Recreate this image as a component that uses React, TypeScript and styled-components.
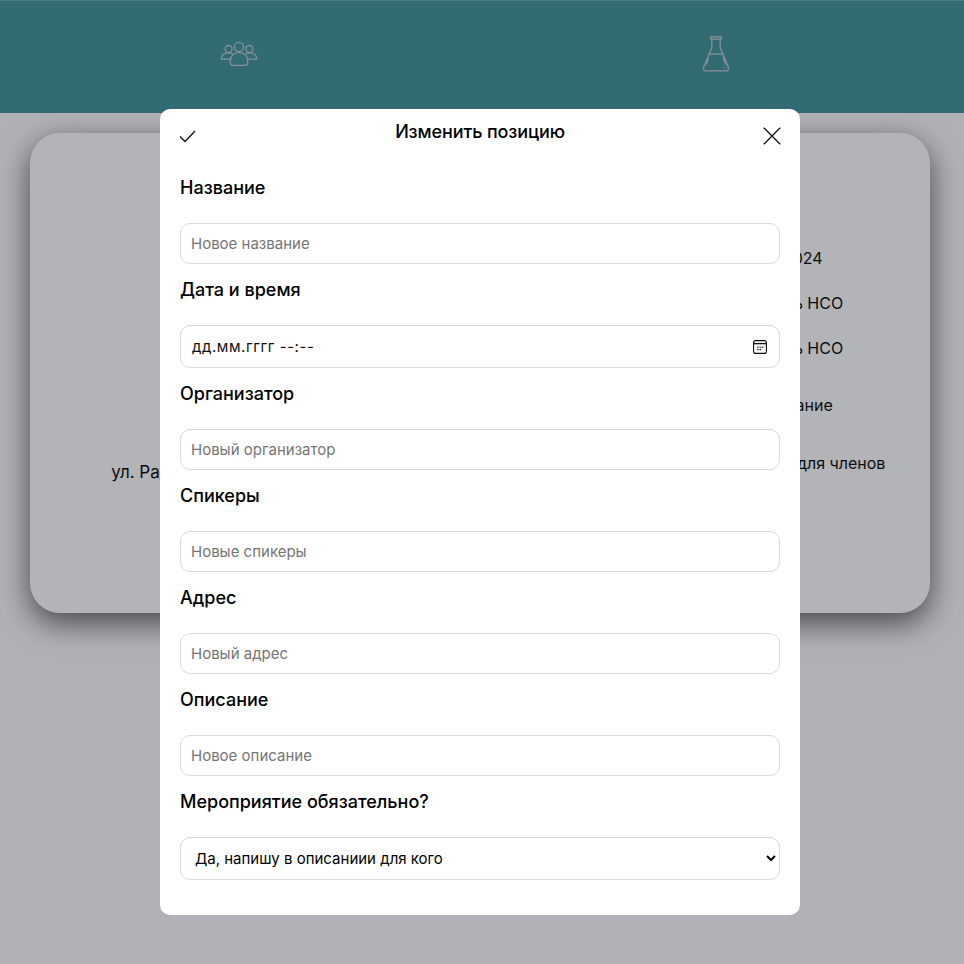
// Libraries
import React, { FC } from 'react';
import styled, { createGlobalStyle } from 'styled-components';

const GlobalStyle = createGlobalStyle`
  html, body {
    margin: 0;
    padding: 0;
    background-color: #fbfbfd;
    font-family: Inter, "Liberation Sans", sans-serif;
  }
`;

const Page = styled.div`
  position: relative;
  height: 964px;
  overflow: hidden;
`;

const Header = styled.header`
  height: 112px;
  border-top: 1px solid #6fa9b3;
  background-color: #48979e;
  display: flex;
  padding-right: 10px;
`;

const HeaderItem = styled.div`
  flex: 1;
  display: flex;
  justify-content: center;
  align-items: center;
  padding-bottom: 7px;
`;

const Card = styled.section`
  margin: 20px 34px 0 30px;
  height: 480px;
  border-radius: 30px;
  background-color: #fff;
  box-shadow: 0 10px 30px rgba(0, 0, 0, 0.6);
  display: grid;
  grid-template-columns: 1fr 1fr;
`;

const CardColumn = styled.div<{ $top: number; $left: number }>`
  padding-top: ${props => props.$top}px;
  padding-left: ${props => props.$left}px;
  display: flex;
  flex-direction: column;
  align-items: center;
  font-size: 16px;
  line-height: 20px;
  color: #111;
`;

const CardValue = styled.div<{ $gap?: number }>`
  margin-bottom: ${props => props.$gap ?? 25}px;
  white-space: nowrap;
`;

const AddressValue = styled(CardValue)`
  font-size: 17px;
`;

const Overlay = styled.div`
  position: absolute;
  inset: 0;
  background-color: rgba(2, 5, 18, 0.3);
`;

const Modal = styled.form`
  position: absolute;
  top: 109px;
  left: 160px;
  width: 640px;
  height: 806px;
  box-sizing: border-box;
  padding: 12px 20px 0;
  border-radius: 10px;
  background-color: #fff;
`;

const ModalHead = styled.div`
  height: 56px;
  display: flex;
  justify-content: space-between;
  align-items: flex-start;
`;

const ModalTitle = styled.h2`
  margin: 0;
  font-size: 18px;
  line-height: 22px;
  font-weight: 500;
  letter-spacing: -0.12px;
  color: #000;
`;

const IconButton = styled.button<{ $shift: number }>`
  margin: 6px ${props => -props.$shift}px 0 ${props => props.$shift}px;
  padding: 0;
  border: 0;
  background: none;
  display: flex;
`;

const Label = styled.label`
  display: block;
  margin: 15px 0 24px;
  font-size: 18px;
  line-height: 22px;
  font-weight: 500;
  color: #000;

  &:first-of-type {
    margin-top: 0;
  }
`;

const TextInput = styled.input`
  display: block;
  width: 100%;
  height: 41px;
  box-sizing: border-box;
  padding: 0 10px;
  border: 1px solid #dadada;
  border-radius: 10px;
  background-color: #fff;
  font-family: inherit;
  font-size: 15px;
  color: #000;

  &::placeholder {
    color: #757575;
    opacity: 1;
  }
`;

const DateBox = styled.div`
  height: 43px;
  box-sizing: border-box;
  padding: 0 12px 0 11px;
  border: 1px solid #dadada;
  border-radius: 10px;
  display: flex;
  justify-content: space-between;
  align-items: center;
  font-size: 15px;
  letter-spacing: 0.55px;
  color: #111;
`;

const SelectBox = styled.select`
  display: block;
  width: 100%;
  height: 43px;
  box-sizing: border-box;
  padding: 0 10px;
  border: 1px solid #dadada;
  border-radius: 10px;
  background-color: #fff;
  font-family: inherit;
  font-size: 15px;
  color: #000;
`;

const PeopleIcon: FC = () => (
  <svg width="38" height="26" viewBox="0 0 38 26" fill="none" stroke="#bccdd1" strokeWidth="1.3">
    <circle cx="19" cy="6" r="4.6" />
    <circle cx="8.6" cy="8" r="3.5" />
    <circle cx="29.4" cy="8" r="3.5" />
    <path d="M10.2 21c0-6 3.6-9.4 8.8-9.4s8.8 3.4 8.8 9.4c0 2-1.2 3.4-3 3.4H13.2c-1.8 0-3-1.4-3-3.4z" />
    <path d="M10.4 18.2H2.6c-1 0-1.6-.7-1.3-1.6.9-3 3.6-4.7 7.3-4.7 1.4 0 2.8.3 4 1" />
    <path d="M27.6 18.2h7.8c1 0 1.6-.7 1.3-1.6-.9-3-3.6-4.7-7.3-4.7-1.4 0-2.8.3-4 1" />
  </svg>
);

const FlaskIcon: FC = () => (
  <svg width="28" height="36" viewBox="0 0 28 36" fill="none" stroke="#bccdd1" strokeWidth="1.3" strokeLinejoin="round">
    <path d="M8.6.8h10.8v2.4H8.6z" />
    <path d="M9.8 3.2v8.6L1.6 31.6c-.6 1.7.2 3.2 2 3.2h20.8c1.8 0 2.6-1.5 2-3.2l-8.2-19.8V3.2" />
    <path d="M6.8 18h14.4" />
    <path d="M6.4 22.5l-2 5.5" strokeLinecap="round" />
    <path d="M21.4 22l2.2 6" strokeLinecap="round" />
    <circle cx="22" cy="31.6" r=".6" fill="#bccdd1" stroke="none" />
  </svg>
);

const CheckIcon: FC = () => (
  <svg width="18" height="18" viewBox="0 0 18 18" fill="none" stroke="#111" strokeWidth="1.3">
    <path d="M1 9.5l5 5L16 4" />
  </svg>
);

const CloseIcon: FC = () => (
  <svg width="18" height="18" viewBox="0 0 18 18" fill="none" stroke="#111" strokeWidth="1.3">
    <path d="M.8.8l16.4 16.4M17.2.8L.8 17.2" />
  </svg>
);

const CalendarIcon: FC = () => (
  <svg width="14" height="14" viewBox="0 0 14 14" fill="none">
    <rect x=".6" y=".6" width="12.8" height="12.8" rx="2" stroke="#111" strokeWidth="1.1" />
    <path d="M.6 3.6h12.8" stroke="#111" strokeWidth="1.4" />
    <path d="M4.2 6.4h1.3v1.3H4.2zM6.6 6.4h1.3v1.3H6.6zM9 6.4h1.3v1.3H9zM4.2 8.9h1.3v1.3H4.2zM6.6 8.9h1.3v1.3H6.6z" fill="#111" />
  </svg>
);

const RIGHT_VALUES = [
  { text: '20.10.2024', gap: 25 },
  { text: 'Секретарь НСО', gap: 25 },
  { text: 'Секретарь НСО', gap: 37 },
  { text: 'Тест задание', gap: 38 },
  { text: 'Лекции только для членов', gap: 0 },
];

const FIELDS = [
  { label: 'Название', placeholder: 'Новое название' },
  { label: 'Дата и время' },
  { label: 'Организатор', placeholder: 'Новый организатор' },
  { label: 'Спикеры', placeholder: 'Новые спикеры' },
  { label: 'Адрес', placeholder: 'Новый адрес' },
  { label: 'Описание', placeholder: 'Новое описание' },
];

const App: FC = () => (
  <Page>
    <GlobalStyle />
    <Header>
      <HeaderItem><PeopleIcon /></HeaderItem>
      <HeaderItem><FlaskIcon /></HeaderItem>
    </Header>
    <Card>
      <CardColumn $top={329} $left={23}>
        <AddressValue $gap={0}>ул. Радищева, дом 12, аудитория 305</AddressValue>
      </CardColumn>
      <CardColumn $top={115} $left={152}>
        {RIGHT_VALUES.map((v, i) => (
          <CardValue key={i} $gap={v.gap}>{v.text}</CardValue>
        ))}
      </CardColumn>
    </Card>
    <Overlay />
    <Modal>
      <ModalHead>
        <IconButton type="button" $shift={-1} aria-label="Сохранить"><CheckIcon /></IconButton>
        <ModalTitle>Изменить позицию</ModalTitle>
        <IconButton type="button" $shift={1} aria-label="Закрыть"><CloseIcon /></IconButton>
      </ModalHead>
      {FIELDS.map(f => (
        <React.Fragment key={f.label}>
          <Label>{f.label}</Label>
          {f.placeholder ? (
            <TextInput placeholder={f.placeholder} />
          ) : (
            <DateBox>
              дд.мм.гггг --:--
              <CalendarIcon />
            </DateBox>
          )}
        </React.Fragment>
      ))}
      <Label>Мероприятие обязательно?</Label>
      <SelectBox defaultValue="some">
        <option value="some">Да, напишу в описаниии для кого</option>
      </SelectBox>
    </Modal>
  </Page>
);

export default App;
